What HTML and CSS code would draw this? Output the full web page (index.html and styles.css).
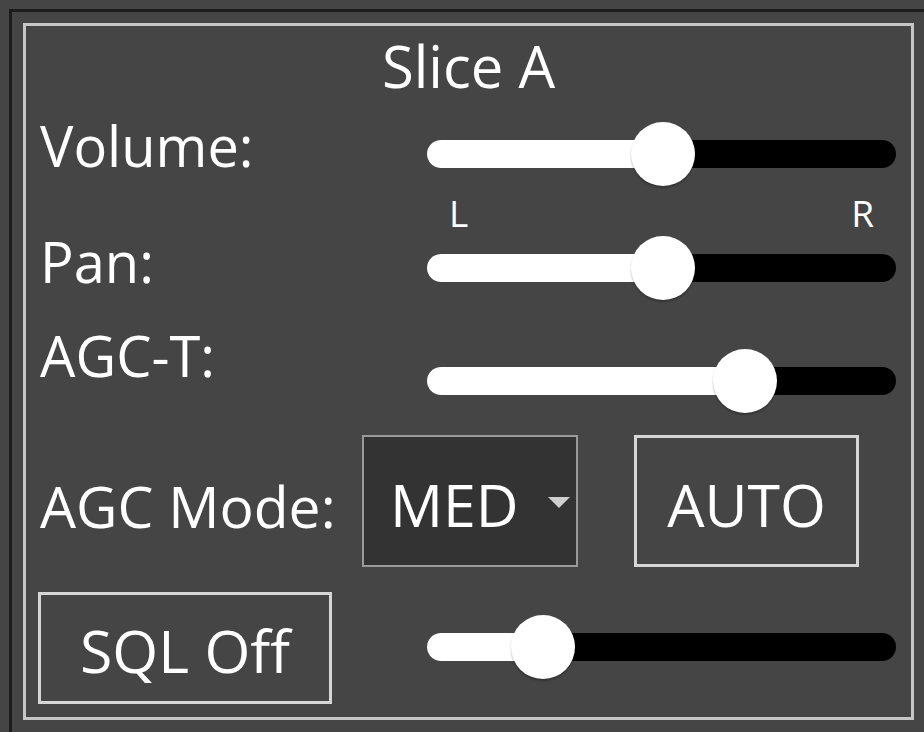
FILE: index.html
```html
<!DOCTYPE html>
<html>
<head>
<meta charset="utf-8">
<link rel="stylesheet" href="styles.css">
</head>
<body>
<div class="frame">
  <div class="panel">
    <div class="title">Slice A</div>

    <div class="row row-volume">
      <div class="label">Volume:</div>
      <div class="slider" style="--p:0.504">
        <div class="track"><div class="fill"></div></div>
        <div class="thumb"></div>
      </div>
    </div>

    <div class="row row-lr">
      <div></div>
      <div class="lr"><span>L</span><span>R</span></div>
    </div>

    <div class="row row-pan">
      <div class="label">Pan:</div>
      <div class="slider" style="--p:0.504">
        <div class="track"><div class="fill"></div></div>
        <div class="thumb"></div>
      </div>
    </div>

    <div class="row row-agct">
      <div class="label">AGC-T:</div>
      <div class="slider" style="--p:0.706">
        <div class="track"><div class="fill"></div></div>
        <div class="thumb"></div>
      </div>
    </div>

    <div class="mode-row">
      <div class="label mode-label">AGC Mode:</div>
      <div class="combo">
        <span class="combo-text">MED</span>
        <svg class="arrow" width="26" height="14" viewBox="0 0 26 14"><polygon points="2,2 24,2 13,13" fill="#cfcfcf"/></svg>
      </div>
      <div class="btn btn-auto">AUTO</div>
    </div>

    <div class="sql-row">
      <div class="btn btn-sql">SQL Off</div>
      <div class="slider" style="--p:0.207">
        <div class="track"><div class="fill"></div></div>
        <div class="thumb"></div>
      </div>
    </div>
  </div>
</div>
</body>
</html>
```
FILE: styles.css
```css
html, body {
  margin: 0;
  padding: 0;
  background: #454545;
  width: 924px;
  height: 732px;
  overflow: hidden;
}

body {
  font-family: "Open Sans", "Noto Sans", sans-serif;
  color: #ffffff;
}

.frame {
  box-sizing: border-box;
  margin: 9px 0 0 9px;
  border-top: 3px solid #1c1c1c;
  border-left: 3px solid #1c1c1c;
  padding: 11px 0 0 11px;
  width: 915px;
  height: 723px;
}

.panel {
  box-sizing: border-box;
  width: 891px;
  height: 697px;
  border: 3px solid #c6c6c6;
  background: #454545;
  padding: 0 14px;
}

.title {
  margin-top: 12px;
  font-size: 58px;
  line-height: 56px;
  height: 56px;
  text-align: center;
}

.row {
  display: grid;
  grid-template-columns: 387px 469px;
  align-items: start;
}

.label {
  font-size: 56px;
  line-height: 56px;
  white-space: nowrap;
}

.row-volume { height: 96px; }
.row-volume .label { margin-top: 23px; }
.row-volume .slider { margin-top: 28px; }

.row-lr { height: 41px; }
.lr {
  display: flex;
  justify-content: space-between;
  padding: 0 22px;
  margin-top: 5px;
  font-size: 37px;
  line-height: 36px;
}

.row-pan { height: 89px; }
.row-pan .label { margin-top: 2px; }
.row-pan .slider { margin-top: 5px; }

.row-agct { height: 105px; }
.row-agct .label { margin-top: 7px; }
.row-agct .slider { margin-top: 29px; }

.slider {
  position: relative;
  height: 64px;
  width: 469px;
}

.track {
  position: absolute;
  left: 0;
  right: 0;
  top: 18px;
  height: 28px;
  border-radius: 14px;
  background: #000;
  overflow: hidden;
}

.fill {
  height: 100%;
  width: calc(32px + var(--p) * 405px);
  background: #fff;
}

.thumb {
  position: absolute;
  top: 0;
  left: calc(var(--p) * 405px);
  width: 64px;
  height: 64px;
  border-radius: 50%;
  background: #fff;
  box-shadow: 0 2px 2px rgba(0, 0, 0, 0.25);
}

.mode-row {
  display: flex;
  align-items: flex-start;
  height: 141px;
}

.mode-label {
  width: 322px;
  margin-top: 53px;
  font-size: 57px;
}

.combo {
  box-sizing: border-box;
  margin-top: 10px;
  width: 216px;
  height: 132px;
  background: #333333;
  border: 2px solid #9a9a9a;
  display: flex;
  align-items: center;
  padding: 0 4px 0 26px;
  justify-content: space-between;
}

.combo-text {
  font-size: 59px;
  line-height: 56px;
  margin-top: 6px;
}

.arrow {
  display: block;
  margin-top: 2px;
}

.btn {
  box-sizing: border-box;
  border: 3px solid #d6d6d6;
  display: flex;
  align-items: center;
  justify-content: center;
  font-size: 59px;
  line-height: 56px;
}

.btn-auto {
  margin-top: 10px;
  margin-left: 56px;
  width: 225px;
  height: 132px;
  padding-top: 6px;
}

.sql-row {
  display: flex;
  align-items: flex-start;
}

.btn-sql {
  margin-top: 26px;
  margin-left: -2px;
  width: 294px;
  height: 112px;
  padding-top: 4px;
}

.sql-row .slider {
  margin-top: 49px;
  margin-left: 95px;
}
```
